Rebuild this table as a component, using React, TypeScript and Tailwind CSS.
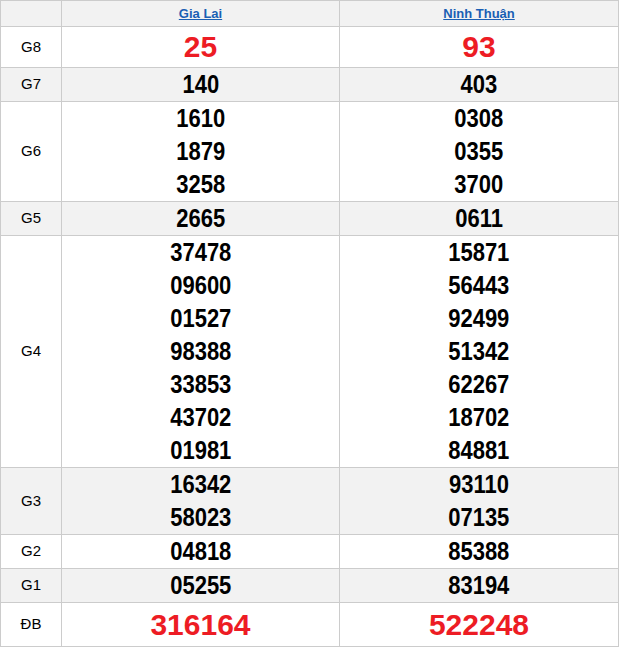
import React from "react";

type Row = { label: string; a: string[]; b: string[]; big?: boolean; shade: boolean; h?: string };

const rows: Row[] = [
  { label: "G8", a: ["25"], b: ["93"], big: true, shade: false, h: "h-[40px] leading-[40px]" },
  { label: "G7", a: ["140"], b: ["403"], shade: true },
  { label: "G6", a: ["1610", "1879", "3258"], b: ["0308", "0355", "3700"], shade: false },
  { label: "G5", a: ["2665"], b: ["0611"], shade: true },
  {
    label: "G4",
    a: ["37478", "09600", "01527", "98388", "33853", "43702", "01981"],
    b: ["15871", "56443", "92499", "51342", "62267", "18702", "84881"],
    shade: false,
  },
  { label: "G3", a: ["16342", "58023"], b: ["93110", "07135"], shade: true },
  { label: "G2", a: ["04818"], b: ["85388"], shade: false },
  { label: "G1", a: ["05255"], b: ["83194"], shade: true },
  { label: "ĐB", a: ["316164"], b: ["522248"], big: true, shade: false, h: "h-[43px] leading-[43px]" },
];

const NumCell = ({ nums, big, h }: { nums: string[]; big?: boolean; h?: string }) => (
  <td className="border border-[#cccccc] p-0 text-center align-middle">
    {nums.map((n) =>
      big ? (
        <div key={n} className={`${h} text-[30px] font-bold text-[#ed1c24]`}>
          {n}
        </div>
      ) : (
        <div key={n} className="h-[33px] leading-[33px] text-[25px] font-bold text-black">
          <span className="inline-block scale-x-[0.88]">{n}</span>
        </div>
      )
    )}
  </td>
);

export default function App() {
  return (
    <div className="bg-white" style={{ fontFamily: "'Liberation Sans', Arial, sans-serif" }}>
      <table className="table-fixed border-collapse w-[618px]">
        <colgroup>
          <col className="w-[61px]" />
          <col className="w-[278px]" />
          <col className="w-[279px]" />
        </colgroup>
        <thead>
          <tr className="bg-[#f2f2f2] h-[26px]">
            <th className="border border-[#cccccc] p-0" />
            <th className="border border-[#cccccc] p-0 text-[13px] font-bold">
              <a href="#" className="text-[#1a5fb4] underline">Gia Lai</a>
            </th>
            <th className="border border-[#cccccc] p-0 text-[13px] font-bold">
              <a href="#" className="text-[#1a5fb4] underline">Ninh Thuận</a>
            </th>
          </tr>
        </thead>
        <tbody>
          {rows.map((r) => (
            <tr key={r.label} className={r.shade ? "bg-[#f2f2f2]" : "bg-white"}>
              <td className="border border-[#cccccc] p-0 text-center align-middle text-[15px] text-black">
                {r.label}
              </td>
              <NumCell nums={r.a} big={r.big} h={r.h} />
              <NumCell nums={r.b} big={r.big} h={r.h} />
            </tr>
          ))}
        </tbody>
      </table>
    </div>
  );
}
